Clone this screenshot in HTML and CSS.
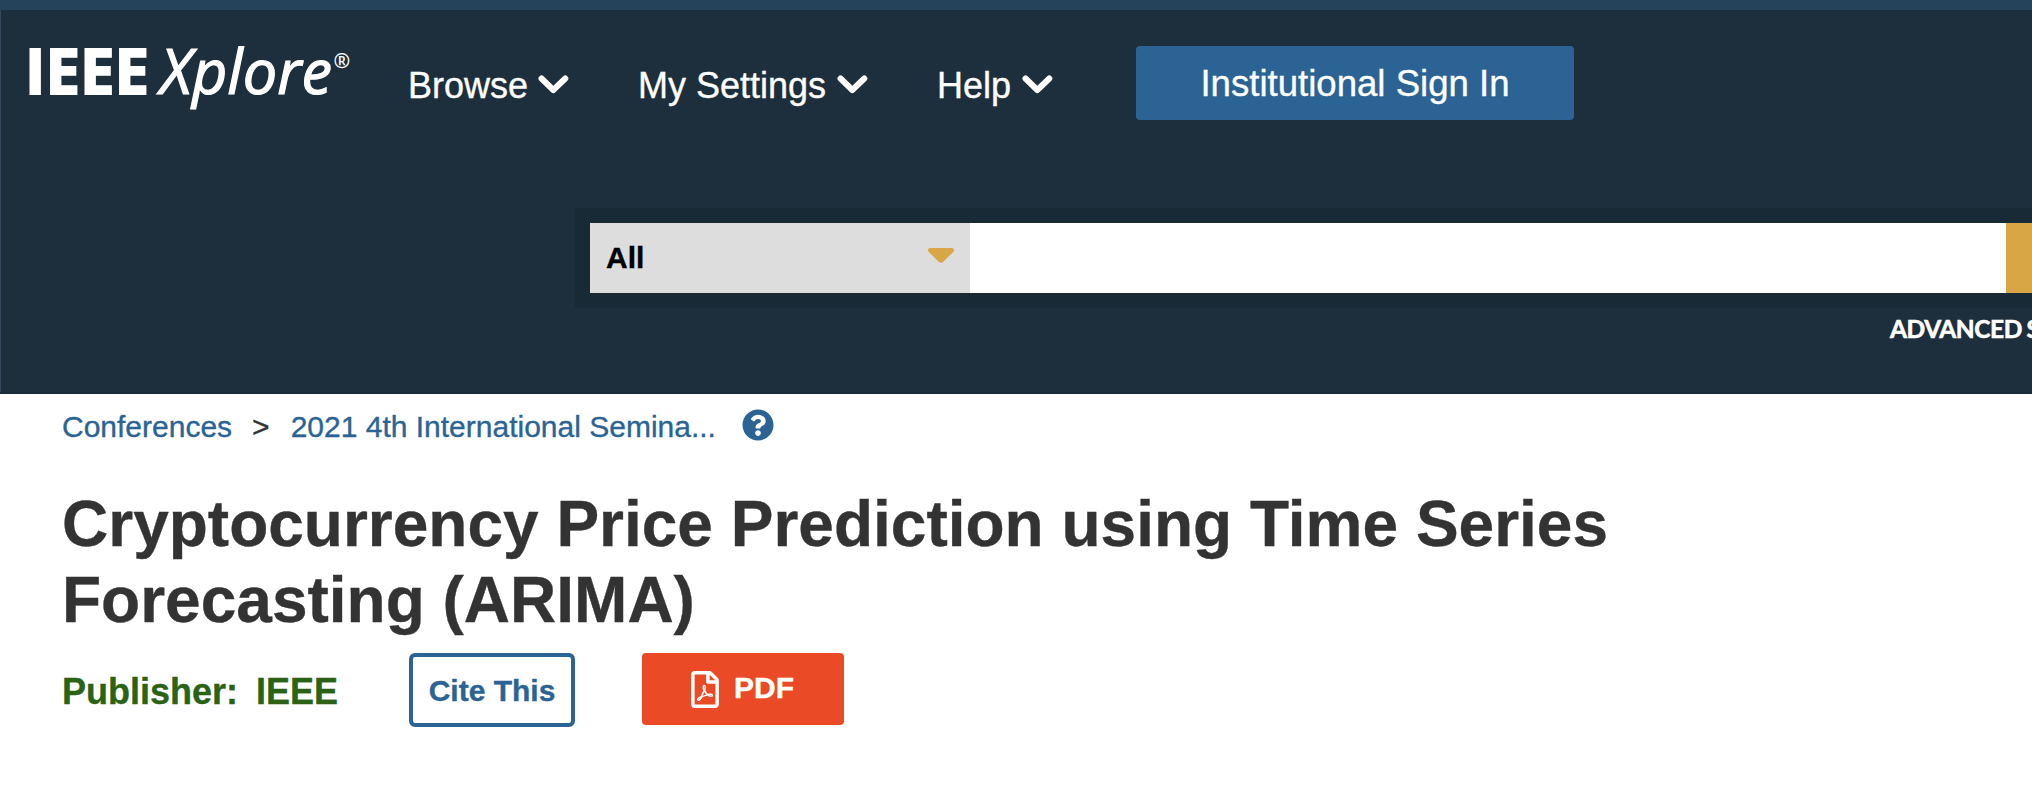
FILE: index.html
```html
<!DOCTYPE html>
<html lang="en">
<head>
<meta charset="utf-8">
<title>IEEE Xplore</title>
<link rel="stylesheet" href="styles.css">
</head>
<body>
<header class="header">
  <div class="topbar">
    <svg class="logo" width="330" height="80" viewBox="0 0 330 80">
      <text class="logo-ieee" x="-5" y="58.500" textLength="124" lengthAdjust="spacingAndGlyphs">IEEE</text>
      <text class="logo-xplore" x="130" y="58.500" textLength="172" lengthAdjust="spacingAndGlyphs">Xplore</text>
      <text class="logo-reg" x="303.500" y="33">®</text>
    </svg>
    <nav class="nav">
      <a class="nav-item browse">Browse<svg class="chevron" viewBox="0 0 31 19"><path d="M3.500 3.500 15.300 15 27.300 3.500"/></svg></a>
      <a class="nav-item settings">My Settings<svg class="chevron" viewBox="0 0 31 19"><path d="M3.500 3.500 15.300 15 27.300 3.500"/></svg></a>
      <a class="nav-item help">Help<svg class="chevron" viewBox="0 0 31 19"><path d="M3.500 3.500 15.300 15 27.300 3.500"/></svg></a>
    </nav>
    <button class="signin">Institutional Sign In</button>
  </div>
  <div class="search">
    <div class="scope">All<svg class="caret" viewBox="0 0 28 17"><path d="M3 1H25Q28.500 2 26 5.200L16.500 14.500Q14 17 11.500 14.500L2 5.200Q-.5 2 3 1Z"/></svg></div>
    <div class="field"></div>
    <div class="go"></div>
  </div>
  <div class="advanced">ADVANCED S</div>
</header>
<main class="document">
  <div class="breadcrumb">
    <a>Conferences</a><span class="sep">&gt;</span><a class="proceedings">2021 4th International Semina...</a>
    <svg class="question" viewBox="0 0 512 512"><path d="M504 256c0 137-111 248-248 248S8 393 8 256 119 8 256 8s248 111 248 248zM262.700 90c-54.500 0-89.300 23-116.500 63.800-3.500 5.300-2.400 12.400 2.700 16.300l34.700 26.300c5.200 3.900 12.600 3 16.700-2.100 17.900-22.700 30.100-35.800 57.300-35.800 20.400 0 45.700 13.100 45.700 33 0 15-12.400 22.700-32.500 34C247.100 238.500 216 254.900 216 296v4c0 6.600 5.400 12 12 12h56c6.600 0 12-5.400 12-12v-1.300c0-28.500 83.200-29.600 83.200-106.700 0-58-60.200-102-116.500-102zM256 338c-25.400 0-46 20.600-46 46s20.600 46 46 46 46-20.600 46-46-20.600-46-46-46z"/></svg>
  </div>
  <h1 class="title">Cryptocurrency Price Prediction using Time Series<br>Forecasting (ARIMA)</h1>
  <div class="actions">
    <div class="publisher"><span>Publisher:</span><span>IEEE</span></div>
    <button class="cite">Cite This</button>
    <button class="pdf"><svg class="file" viewBox="0 0 384 512"><path d="M369.900 97.900L286 14C277 5 264.800-.1 252.100-.1H48C21.500 0 0 21.500 0 48v416c0 26.500 21.500 48 48 48h288c26.500 0 48-21.500 48-48V131.900c0-12.700-5.100-25-14.100-34zM332.100 128H256V51.900l76.100 76.100zM48 464V48h160v104c0 13.300 10.700 24 24 24h104v288H48zm250.200-143.700c-12.200-12-47-8.700-64.400-6.500-17.200-10.500-28.700-25-36.800-46.300 3.900-16.100 10.100-40.600 5.400-56-4.200-26.200-37.800-23.600-42.600-5.900-4.400 16.100-.4 38.500 7 67.100-10 23.900-24.900 56-35.400 74.400-20 10.300-47 26.200-51 46.200-3.300 15.800 26 55.200 76.100-31.200 22.400-7.400 46.800-16.500 68.400-20.100 18.900 10.200 41 17 55.800 17 25.500 0 28-28.200 17.500-38.700zm-198.100 77.800c5.100-13.700 24.500-29.500 30.400-35-19 30.300-30.400 35.700-30.400 35zm81.600-190.600c7.400 0 6.700 32.100 1.800 40.800-4.400-13.900-4.300-40.800-1.800-40.800zm-24.400 136.600c9.700-16.900 18-37 24.700-54.700 8.300 15.100 18.900 27.200 30.100 35.500-20.800 4.300-38.900 13.100-54.800 19.200zm131.600-5s-5 6-37.300-7.800c35.100-2.600 40.900 5.400 37.300 7.800z"/></svg><span>PDF</span></button>
  </div>
</main>
</body>
</html>
```
FILE: styles.css
```css
* { box-sizing: border-box; }
body {
  margin: 0;
  background: #fff;
  color: #333;
  font-family: "Liberation Sans", Arial, sans-serif;
  -webkit-text-stroke: .35px currentColor;
  overflow: hidden;
}
button { font-family: inherit; cursor: pointer; padding: 0; }
.header {
  height: 394px;
  background: #1d2f3d;
  border-top: 10px solid #25445b;
  border-bottom: 2px solid #192b38;
  box-shadow: inset 1px 0 #33485a;
  overflow: hidden;
}
.topbar { display: flex; height: 198px; padding: 25px 0 0 30px; align-items: flex-start; }
.logo { flex: none; overflow: visible; -webkit-text-stroke: 0; }
.logo text { fill: #fff; stroke: #fff; stroke-width: 0; }
.logo .logo-ieee { font: 700 62px "Open Sans", sans-serif; stroke-width: 2px; }
.logo .logo-xplore { font: italic 500 62px "Open Sans", sans-serif; stroke-width: 1.2px; }
.logo .logo-reg { font: 600 20px "Open Sans", sans-serif; }
.nav { display: flex; padding: 31px 0 0 48px; }
.nav-item {
  display: flex;
  flex: none;
  justify-content: space-between;
  height: 40px;
  font-size: 36px;
  line-height: 40px;
  color: #fff;
  white-space: nowrap;
}
.browse { width: 161px; margin-right: 69px; }
.settings { width: 230px; margin-right: 69px; }
.help { width: 116px; }
.chevron { width: 31px; height: 19px; margin-top: 9px; fill: none; stroke: #fff; stroke-width: 6; stroke-linecap: round; stroke-linejoin: round; }
.signin {
  width: 438px;
  height: 74px;
  margin: 11px 0 0 83px;
  padding-top: 2px;
  border: 0;
  border-radius: 4px;
  background: #2b6494;
  color: #fff;
  font-size: 36.6px;
}
.search {
  display: flex;
  height: 100px;
  margin-left: 575px;
  padding: 15px 0 15px 15px;
  background: #192a37;
}
.scope {
  display: flex;
  justify-content: space-between;
  width: 380px;
  padding: 0 15px 0 16px;
  background: #ddd;
  color: #000;
  font-size: 30px;
  font-weight: 700;
  line-height: 70px;
}
.caret { width: 28px; height: 17px; margin-top: 24px; fill: #d9a646; }
.field { width: 1036px; background: #fff; }
.go { flex: 1; background: #d9a646; }
.advanced {
  height: 30px;
  margin: 6px 0 0 1890px;
  color: #fff;
  font: 700 24.5px/30px Lato, sans-serif;
  letter-spacing: -.45px;
  word-spacing: -1px;
  -webkit-text-stroke: .6px currentColor;
  white-space: nowrap;
}
.document { padding: 0 62px; }
.breadcrumb { display: flex; height: 66px; padding-top: 15px; font-size: 30px; line-height: 36px; }
.breadcrumb a { color: #2b6494; }
.sep { margin: 0 21px 0 20px; }
.question { width: 32px; height: 32px; margin: 0 0 0 26px; fill: #2b6494; }
.title { margin: 26px 0 0; font-size: 64px; line-height: 76px; white-space: nowrap; }
.actions { display: flex; padding-top: 15px; }
.publisher {
  display: flex;
  justify-content: space-between;
  width: 276px;
  padding-top: 19px;
  color: #2b6316;
  font-size: 36px;
  font-weight: 700;
  line-height: 40px;
}
.cite {
  width: 166px;
  height: 74px;
  margin-left: 71px;
  padding-top: 1px;
  border: 4px solid #2b6494;
  border-radius: 6px;
  background: #fff;
  color: #2b6494;
  font-size: 30px;
  font-weight: 700;
}
.pdf {
  display: flex;
  align-items: center;
  width: 202px;
  height: 72px;
  margin-left: 67px;
  padding-left: 49px;
  border: 0;
  border-radius: 4px;
  background: #eb4a26;
  color: #fff;
  font-size: 30px;
  font-weight: 700;
}
.pdf span { padding-bottom: 2px; }
.file { width: 28px; height: 37px; margin-right: 15px; fill: #fff; }
```
